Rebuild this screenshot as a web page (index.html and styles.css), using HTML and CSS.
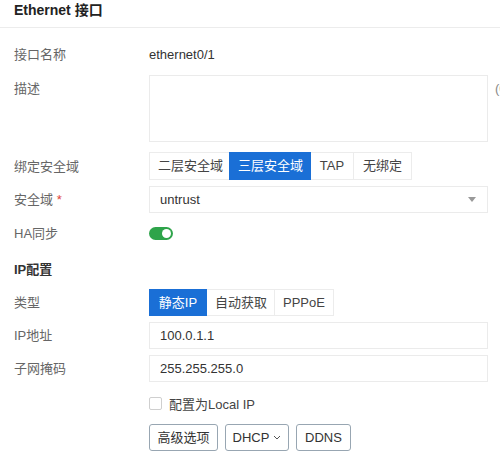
FILE: index.html
```html
<!DOCTYPE html>
<html>
<head>
<meta charset="utf-8">
<link rel="stylesheet" href="styles.css">
</head>
<body>
<div class="page">
  <div class="header"><span class="title">Ethernet 接口</span></div>
  <div class="form">
    <div class="row r-name">
      <div class="label">接口名称</div>
      <div class="value">ethernet0/1</div>
    </div>
    <div class="row r-desc">
      <div class="label">描述</div>
      <div class="textarea"></div>
      <div class="count">(0/255)</div>
    </div>
    <div class="row r-bind">
      <div class="label">绑定安全域</div>
      <div class="seg">
        <span class="seg-item">二层安全域</span>
        <span class="seg-item active">三层安全域</span>
        <span class="seg-item">TAP</span>
        <span class="seg-item">无绑定</span>
      </div>
    </div>
    <div class="row r-zone">
      <div class="label">安全域 <span class="req">*</span></div>
      <div class="select"><span>untrust</span><span class="arrow"></span></div>
    </div>
    <div class="row r-ha">
      <div class="label">HA同步</div>
      <div class="toggle"><span class="knob"></span></div>
    </div>
    <div class="row r-section">
      <div class="section">IP配置</div>
    </div>
    <div class="row r-type">
      <div class="label">类型</div>
      <div class="seg">
        <span class="seg-item active">静态IP</span>
        <span class="seg-item">自动获取</span>
        <span class="seg-item">PPPoE</span>
      </div>
    </div>
    <div class="row r-ip">
      <div class="label">IP地址</div>
      <div class="input">100.0.1.1</div>
    </div>
    <div class="row r-mask">
      <div class="label">子网掩码</div>
      <div class="input">255.255.255.0</div>
    </div>
    <div class="row r-check">
      <div class="label"></div>
      <label class="check"><span class="box"></span><span>配置为Local IP</span></label>
    </div>
    <div class="row r-btns">
      <div class="label"></div>
      <div class="btns">
        <span class="btn b-adv">高级选项</span>
        <span class="btn b-dhcp">DHCP <svg class="chev" width="8" height="5" viewBox="0 0 8 5"><path d="M1 1 L4 4 L7 1" fill="none" stroke="#555" stroke-width="1"/></svg></span>
        <span class="btn b-ddns">DDNS</span>
      </div>
    </div>
  </div>
</div>
</body>
</html>
```
FILE: styles.css
```css
* { box-sizing: border-box; }
html, body { margin: 0; padding: 0; }
body {
  width: 500px;
  height: 464px;
  overflow: hidden;
  background: #fff;
  font-family: "Liberation Sans", Arial, "Noto Sans CJK SC", sans-serif;
  font-size: 13px;
  color: #333;
}
.page { width: 500px; overflow: hidden; }
.header {
  height: 28px;
  border-bottom: 1px solid #ececec;
  padding-left: 14px;
  line-height: 20px;
}
.title {
  font-size: 14px;
  font-weight: bold;
  color: #222;
}
.form {
  display: flex;
  flex-direction: column;
  gap: 6px;
  padding: 12px 0 0 14px;
}
.row {
  display: flex;
  align-items: center;
  white-space: nowrap;
}
.label {
  width: 135px;
  flex: none;
  color: #666;
  line-height: 27px;
}
.req { color: #e0443a; }
.value { color: #333; }
.r-name { height: 29px; }
.r-desc { height: 67px; align-items: flex-start; }
.textarea {
  width: 339px;
  height: 67px;
  border: 1px solid #ebebeb;
  flex: none;
}
.count {
  margin-left: 7px;
  color: #888;
  line-height: 27px;
}
.r-bind { height: 28px; margin-top: 4px; }
.seg { display: flex; height: 28px; }
.seg-item {
  height: 28px;
  line-height: 26px;
  padding: 0 8px;
  border: 1px solid #ececec;
  margin-left: -1px;
  color: #444;
}
.seg-item:first-child { margin-left: 0; }
.r-bind .seg-item:nth-child(1) { width: 81px; text-align: center; }
.r-bind .seg-item:nth-child(2) { width: 82px; text-align: center; }
.r-bind .seg-item:nth-child(3) { width: 44px; text-align: center; }
.r-bind .seg-item:nth-child(4) { width: 59px; text-align: center; }
.r-type .seg { height: 27px; }
.r-type .seg-item { height: 27px; line-height: 25px; text-align: center; }
.r-type .seg-item:nth-child(1) { width: 58px; }
.r-type .seg-item:nth-child(2) { width: 69px; }
.r-type .seg-item:nth-child(3) { width: 60px; }
.seg-item.active {
  background: #1a6fd6;
  border-color: #1a6fd6;
  color: #fff;
  position: relative;
}
.r-zone { height: 27px; }
.select, .input {
  width: 339px;
  height: 27px;
  border: 1px solid #ebebeb;
  padding: 0 10px;
  line-height: 25px;
  color: #333;
  display: flex;
  justify-content: space-between;
  align-items: center;
  flex: none;
}
.arrow {
  width: 0; height: 0;
  border-left: 4px solid transparent;
  border-right: 4px solid transparent;
  border-top: 5px solid #999;
  margin-right: 1px;
}
.r-ha { height: 29px; }
.toggle {
  width: 24px;
  height: 13px;
  border-radius: 7px;
  background: #2ea44a;
  position: relative;
}
.knob {
  position: absolute;
  right: 2px;
  top: 2px;
  width: 9px;
  height: 9px;
  border-radius: 50%;
  background: #fff;
}
.r-section { height: 29px; }
.section { font-weight: bold; color: #333; }
.r-type { height: 27px; }
.r-ip, .r-mask { height: 27px; }
.r-check { height: 30px; }
.check { display: flex; align-items: center; color: #444; }
.box {
  width: 13px;
  height: 13px;
  border: 1px solid #cfcfcf;
  border-radius: 2px;
  margin-right: 7px;
  background: #fff;
}
.r-btns { height: 27px; }
.btns { display: flex; gap: 7px; }
.btn {
  height: 27px;
  line-height: 25px;
  border: 1px solid #98a6b2;
  border-radius: 3px;
  color: #333;
  display: flex;
  align-items: center;
  justify-content: center;
}
.b-adv { width: 69px; }
.b-dhcp { width: 64px; }
.b-ddns { width: 55px; }
.chev { margin-left: 4px; }
```
